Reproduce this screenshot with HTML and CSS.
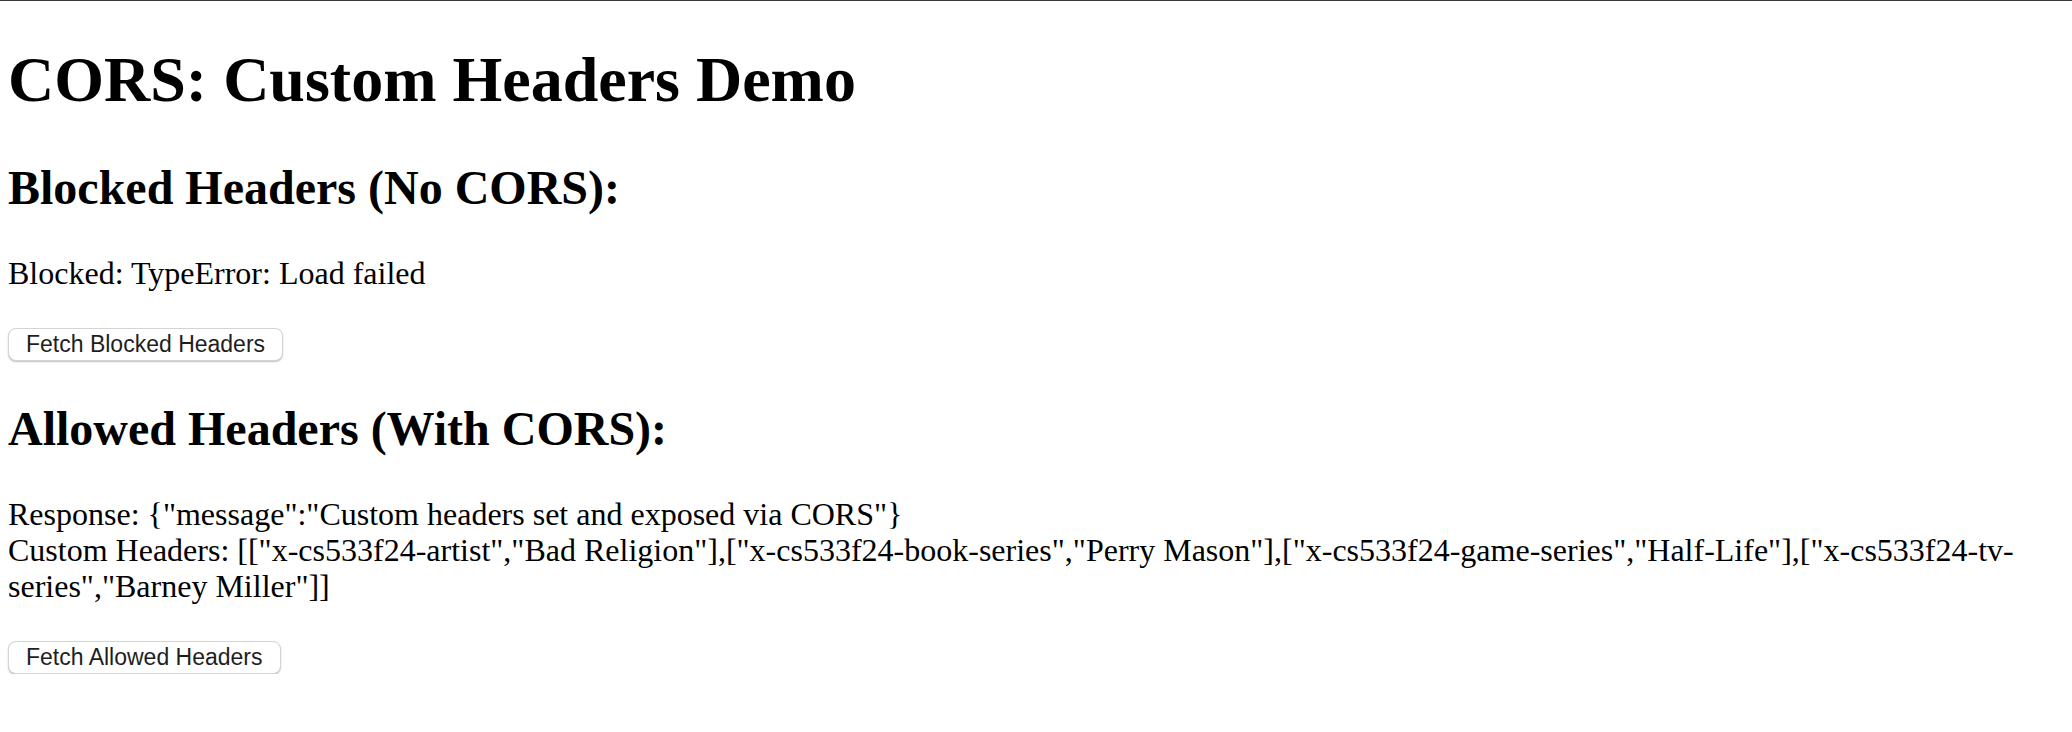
FILE: index.html
```html
<!DOCTYPE html>
<html lang="en">
<head>
<meta charset="utf-8">
<title>CORS: Custom Headers Demo</title>
<link rel="stylesheet" href="styles.css">
</head>
<body>
<div class="topline"></div>
<main class="page">
  <h1 class="title">CORS: Custom Headers Demo</h1>

  <section class="demo">
    <h2 class="demo-title">Blocked Headers (No CORS):</h2>
    <p class="result">Blocked: TypeError: Load failed</p>
    <div class="actions"><button class="btn" type="button">Fetch Blocked Headers</button></div>
  </section>

  <section class="demo">
    <h2 class="demo-title">Allowed Headers (With CORS):</h2>
    <p class="result">Response: {"message":"Custom headers set and exposed via CORS"}<br>Custom Headers: [["x-cs533f24-artist","Bad Religion"],["x-cs533f24-book-series","Perry Mason"],["x-cs533f24-game-series","Half-Life"],["x-cs533f24-tv-series","Barney Miller"]]</p>
    <div class="actions"><button class="btn" type="button">Fetch Allowed Headers</button></div>
  </section>
</main>
</body>
</html>
```

FILE: styles.css
```css
html {
  background: #ffffff;
}

body {
  margin: 0;
  font-family: "Liberation Serif", "Times New Roman", serif;
  font-size: 32px;
  color: #000000;
}

.topline {
  height: 1px;
  background: #3a3a3a;
}

.page {
  padding: 0 8px;
  display: flow-root;
}

.title {
  font-size: 64px;
  font-weight: bold;
  margin: 42px 0 43px;
  line-height: 74px;
}

.demo-title {
  font-size: 48px;
  font-weight: bold;
  margin: 40px 0;
  line-height: 55px;
}

.result {
  margin: 32px 0;
  line-height: 36px;
}

.actions {
  line-height: 36px;
  margin: 32px 0 0;
}

.btn {
  font-family: "Liberation Sans", Arial, sans-serif;
  font-size: 23px;
  line-height: 31px;
  color: #1e1e1e;
  background: #ffffff;
  border: 1px solid #d4d4d4;
  border-radius: 8px;
  padding: 0 17px;
  box-shadow: 0 1px 1.5px rgba(0, 0, 0, 0.25);
  vertical-align: middle;
}
```
